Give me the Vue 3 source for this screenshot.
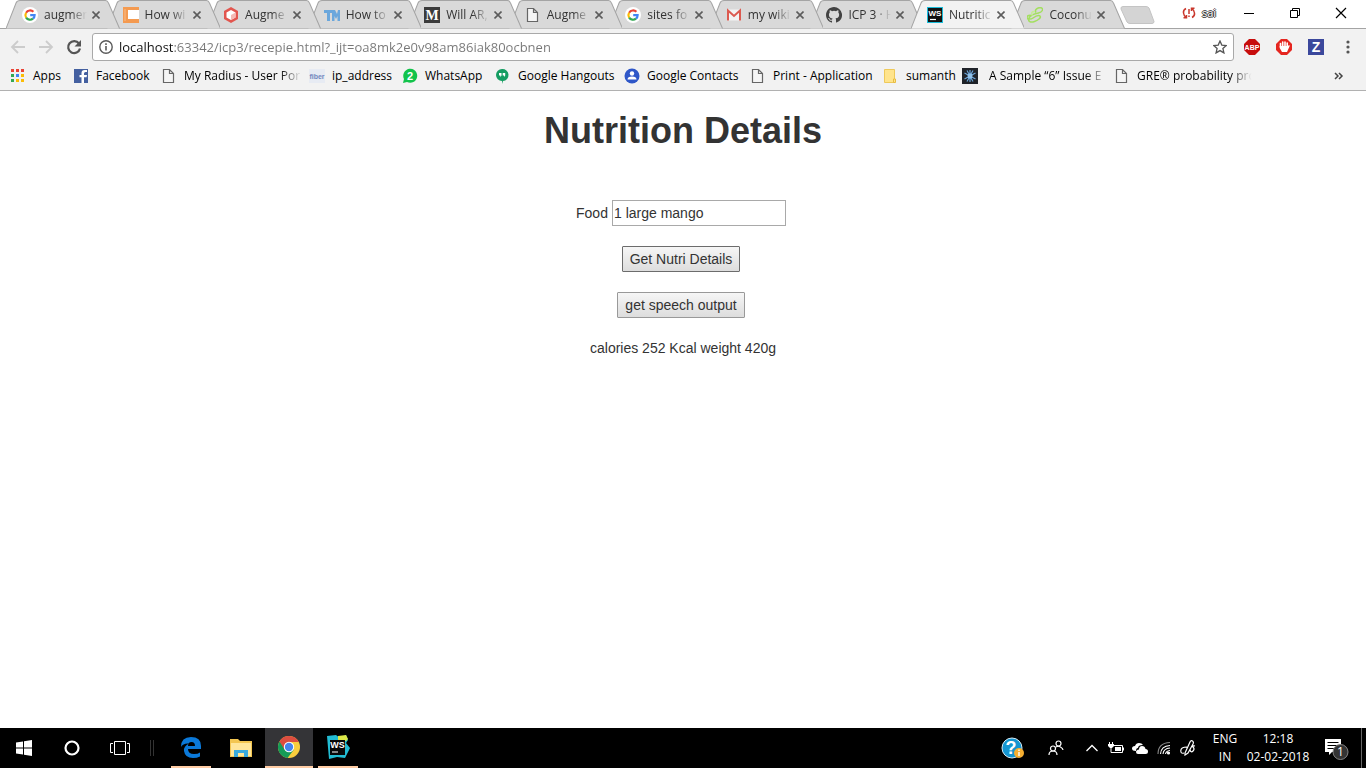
<script setup>
import { ref } from 'vue'

const page = '<path d="M2.500 1.500h6l4 4v9h-10zM8.500 1.500v4h4" fill="#f5f5f5" stroke="#666" stroke-width="1.200"/>'
const google = '<circle cx="8" cy="8" r="8" fill="#fff"/><g fill="none" stroke-width="2.200"><path d="M4.100 5.700A4.700 4.700 0 0 1 11.400 4.800" stroke="#ea4335"/><path d="M4.100 5.700A4.700 4.700 0 0 0 4.100 10.600" stroke="#fbbc05"/><path d="M4.100 10.600A4.700 4.700 0 0 0 11 11.700" stroke="#34a853"/><path d="M11 11.700Q12.600 10.400 12.600 8.200H8.200" stroke="#4285f4"/></g>'
const wsText = '<text x="8" y="9" text-anchor="middle" font-family="Liberation Sans" font-weight="700" font-size="8" fill="#fff">WS</text>'

const icons = {
  page,
  google,
  orange: '<path d="M0 0h16v3H5v9h11v4H0z" fill="#f49a50"/><path d="M5 3h11v9H5z" fill="#fff"/><path d="M2 2v12" stroke="#f8bd87"/>',
  hex: '<path d="M8 0l7 4v8l-7 4-7-4V4z" fill="#e2564f"/><path d="M8 3l4.500 2.500v5L8 13l-4.500-2.500v-5z" fill="#fff"/><path d="M8 8l4.500-2.500v5L8 13z" fill="#f5bab5"/>',
  tm: '<path d="M0 3h9v3H6v8H3V6H0zM8 3h3l2 4 1-4h2v11h-2.500V9L12 12 10.500 9v5H8z" fill="#6ba7dc"/>',
  medium: '<path d="M0 0h16v16H0z" fill="#3b3b3b"/><text x="8" y="13" text-anchor="middle" font-family="Liberation Serif" font-weight="700" font-size="14" fill="#fff">M</text>',
  gmail: '<path d="M1 2.500h14v11H1z" fill="#f3f3f3"/><path d="M2 13.500v-10L8 9l6-5.500v10" fill="none" stroke="#dc5a50" stroke-width="2"/>',
  github: '<path d="M8 0C3.580 0 0 3.580 0 8c0 3.540 2.290 6.530 5.470 7.590.4.070.55-.17.55-.38v-1.490c-2.010.37-2.530-.49-2.690-.94-.09-.23-.48-.94-.82-1.130-.28-.15-.68-.52-.01-.53.63-.01 1.080.58 1.230.82.72 1.210 1.870.87 2.330.66.070-.52.28-.87.51-1.070-1.780-.2-3.640-.89-3.640-3.950 0-.87.31-1.590.82-2.150-.08-.2-.36-1.020.08-2.120 0 0 .67-.21 2.200.82a7.400 7.400 0 0 1 4 0c1.530-1.040 2.200-.82 2.200-.82.44 1.100.16 1.920.08 2.120.51.56.82 1.270.82 2.150 0 3.070-1.870 3.750-3.650 3.950.29.25.54.73.54 1.480v2.200c0 .21.15.46.55.38A8 8 0 0 0 8 0z" fill="#424242"/>',
  ws: '<path d="M0 0h16v16H0z" fill="#19bcd9"/><path d="M1 1h14v14H1z" fill="#111"/>' + wsText + '<path d="M3 12.500h6" stroke="#fff" stroke-width="1.200"/>',
  coconut: '<g fill="none" stroke="#a3df5f" stroke-width="1.500"><path d="M9 5.500C7 3 11 0 14 .8s1.500 4.500-2.500 5.200-8 1.800-9.500 5 1.500 5 5.500 3.500 7-4 5.500-5.500-5 .5-7 2-6 1.500-6-.5 3-3 5-1.500"/><path d="M5.500 8.500C3.500 6 5 4 8 4.500" stroke="#c5ec96"/></g>',
  apps: '<path d="M1 1h3v3H1zM6 1h3v3H6zM11 1h3v3h-3z" fill="#ea4335"/><path d="M1 6h3v3H1zM1 11h3v3H1z" fill="#34a853"/><path d="M6 6h3v3H6z" fill="#4285f4"/><path d="M11 6h3v3h-3zM6 11h3v3H6zM11 11h3v3h-3z" fill="#fbbc05"/>',
  facebook: '<path d="M1 1h14v14H1z" fill="#4460a0"/><path d="M14 4h-1.500q-1.500 0-1.500 1.500V7h3l-.4 2.200H11V15H8.500V9.200h-2V7h2V5q0-3 3-3H14z" fill="#fff"/>',
  fiber: '<path d="M0 1h16v14H0z" fill="#e7ebf3"/><text x="8" y="11" text-anchor="middle" font-family="Liberation Sans" font-weight="700" font-size="7" fill="#7388bd">fiber</text>',
  whatsapp: '<path d="M1 15l1-4a7 7 0 1 1 3 3z" fill="#12c34b"/><text x="8" y="12" text-anchor="middle" font-family="Liberation Sans" font-weight="700" font-size="11" fill="#fff">2</text>',
  hangouts: '<path d="M7 1a6 6 0 0 1 1 12l-1 3v-3A6 6 0 0 1 7 1z" fill="#159d62"/><path d="M4 5h2.500v2.500L5.300 9V7.500H4zM7.700 5h2.500v2.500L9 9V7.500H7.700z" fill="#fff"/>',
  contacts: '<circle cx="8" cy="8" r="7.500" fill="#2f57c8"/><circle cx="8" cy="5.500" r="2.200" fill="#fff"/><path d="M3.500 11.500q0-3 4.500-3t4.500 3z" fill="#fff"/>',
  folder: '<path d="M1.500 1.500h10v13h-10z" fill="#ffe48c" stroke="#eec95a"/><path d="M10.500 11h2v3.500h-2z" fill="#ffe48c" stroke="#e8bd42"/>',
  star: '<path d="M0 0h16v16H0z" fill="#1f2329"/><path d="M8 2v12M2.500 5l11 6M2.500 11l11-6M5 2.500l6 11M11 2.500l-6 11" stroke="#6ba4d8" stroke-width="1.200"/><circle cx="8" cy="8" r="2.500" fill="#8fc0e8"/>',
  abp: '<path d="M5 0h6l5 5v6l-5 5H5l-5-5V5z" fill="#c70d0c"/><text x="8" y="11" text-anchor="middle" font-family="Liberation Sans" font-weight="700" font-size="7" fill="#fff">ABP</text>',
  hand: '<path d="M5 0h6l5 5v6l-5 5H5l-5-5V5z" fill="#e52620"/><path d="M4.500 8V4.500M6.700 7V3M9 7V3M11.200 8V4" stroke="#fff" stroke-width="1.600" stroke-linecap="round"/><path d="M3.700 7H12l1-1q1 0 .5 1.500L11 13H6L3.700 9z" fill="#fff"/>',
  z: '<path d="M0 0h16v16H0z" fill="#3b489c"/><text x="8" y="13" text-anchor="middle" font-family="Liberation Sans" font-weight="700" font-size="14" fill="#fff">Z</text>',
  windows: '<path d="M0 2.500l7-1v6H0zM8 1.300L16 0v7.500H8zM0 8.500h7v6l-7-1zM8 8.500h8V16l-8-1.300z" fill="#fff"/>',
  cortana: '<circle cx="8" cy="8" r="6.500" fill="none" stroke="#fff" stroke-width="2.200"/>',
}

const tabs = [
  { title: 'augmer', icon: 'google' },
  { title: 'How wi', icon: 'orange' },
  { title: 'Augme', icon: 'hex' },
  { title: 'How to', icon: 'tm' },
  { title: 'Will AR,', icon: 'medium' },
  { title: 'Augme', icon: 'page' },
  { title: 'sites fo', icon: 'google' },
  { title: 'my wiki', icon: 'gmail' },
  { title: 'ICP 3 · H', icon: 'github' },
  { title: 'Nutritic', icon: 'ws', active: true },
  { title: 'Coconu', icon: 'coconut' },
]

const bookmarks = [
  { title: 'Apps', icon: 'apps' },
  { title: 'Facebook', icon: 'facebook' },
  { title: 'My Radius - User Por', icon: 'page', fade: true },
  { title: 'ip_address', icon: 'fiber' },
  { title: 'WhatsApp', icon: 'whatsapp' },
  { title: 'Google Hangouts', icon: 'hangouts' },
  { title: 'Google Contacts', icon: 'contacts' },
  { title: 'Print - Application', icon: 'page' },
  { title: 'sumanth', icon: 'folder' },
  { title: 'A Sample “6” Issue E', icon: 'star', fade: true, wide: true },
  { title: 'GRE® probability pro', icon: 'page', fade: true },
]

const url = ref('localhost:63342/icp3/recepie.html?_ijt=oa8mk2e0v98am86iak80ocbnen')
const food = ref('1 large mango')
</script>

<template>
  <div class="screen">
    <header class="browser">
      <div class="strip">
        <div class="tabs">
          <div v-for="(tab, i) in tabs" :key="i" class="tab" :class="{ active: tab.active }" :style="{ zIndex: tab.active ? 20 : 12 - i }">
            <svg class="shape" viewBox="0 0 113 29" preserveAspectRatio="none">
              <path d="M0 28.500L10 3Q11 .5 14 .5H99Q101 .5 102 3L113 28.500" />
            </svg>
            <svg class="icon" viewBox="0 0 16 16" v-html="icons[tab.icon]"></svg>
            <span class="tab-title">{{ tab.title }}</span>
            <button class="close" aria-label="Close tab"><svg viewBox="0 0 8 8" width="8" height="8"><path d="M.5 .5l7 7M7.500 .5l-7 7" stroke="#5c5c5c" stroke-width="1.600" /></svg></button>
          </div>
        </div>
        <button class="new-tab" aria-label="New tab"><svg viewBox="0 0 36 18" width="36" height="18"><path d="M3 .5H26Q28 .5 29 2L34 15.500Q34 17.500 32 17.500H10Q8 17.500 7 16L1 3Q.5 .5 3 .5z" fill="#d4d4d4" stroke="#c4c4c4" /></svg></button>
        <div class="window-controls">
          <button class="profile">
            <svg viewBox="0 0 14 12" width="14" height="12" fill="none" stroke="#c9372c" stroke-width="1.500"><path d="M4 1.500Q1 3 1.500 6T4 10.500M1.500 10.800h3V8M10 10.500q3-1.500 2.500-4.500T10 1.500M12.500 1.200h-3V4M7 2v5M7 8.500v1.500" /></svg>
            <span>sai</span>
          </button>
          <button aria-label="Minimize"><svg viewBox="0 0 12 12" width="12" height="12"><path d="M1 6.500h10" stroke="#000" /></svg></button>
          <button aria-label="Restore"><svg viewBox="0 0 12 12" width="12" height="12"><path d="M1.500 3.500h7v7h-7zM3.500 3.500v-2h7v7h-2" fill="none" stroke="#000" /></svg></button>
          <button aria-label="Close"><svg viewBox="0 0 12 12" width="12" height="12"><path d="M1 1l10 10M11 1L1 11" stroke="#000" stroke-width="1.200" /></svg></button>
        </div>
      </div>

      <div class="toolbar">
        <div class="nav">
          <button aria-label="Back"><svg viewBox="0 0 16 16" width="16" height="16"><path d="M15 8H2M8 2L2 8l6 6" fill="none" stroke="#ccc" stroke-width="1.800" /></svg></button>
          <button aria-label="Forward"><svg viewBox="0 0 16 16" width="16" height="16"><path d="M1 8h13M8 2l6 6-6 6" fill="none" stroke="#ccc" stroke-width="1.800" /></svg></button>
          <button aria-label="Reload"><svg viewBox="0 0 16 16" width="16" height="16"><path d="M13 4.500A6 6 0 1 0 14 9.500" fill="none" stroke="#555" stroke-width="2.200" /><path d="M15 1v6.500H8.500z" fill="#555" /></svg></button>
        </div>
        <div class="omnibox">
          <svg viewBox="0 0 14 14" width="14" height="14"><circle cx="7" cy="7" r="6.200" fill="none" stroke="#5a5a5a" stroke-width="1.400" /><path d="M7 6v4.500M7 3.300v1.600" stroke="#5a5a5a" stroke-width="1.600" /></svg>
          <input v-model="url" class="url" aria-label="Address" spellcheck="false" />
          <button aria-label="Bookmark this page"><svg viewBox="0 0 14 14" width="14" height="14"><path d="M7 1l1.800 4.100 4.400.4-3.300 3 1 4.400L7 10.600l-3.900 2.300 1-4.400-3.300-3 4.400-.4z" fill="none" stroke="#555" stroke-width="1.300" /></svg></button>
        </div>
        <div class="extensions">
          <button aria-label="Adblock Plus"><svg class="icon" viewBox="0 0 16 16" v-html="icons.abp"></svg></button>
          <button aria-label="Adblock"><svg class="icon" viewBox="0 0 16 16" v-html="icons.hand"></svg></button>
          <button aria-label="Z extension"><svg class="icon" viewBox="0 0 16 16" v-html="icons.z"></svg></button>
          <button aria-label="Menu"><svg class="icon" viewBox="0 0 16 16" fill="#555"><circle cx="8" cy="3" r="1.600" /><circle cx="8" cy="8" r="1.600" /><circle cx="8" cy="13" r="1.600" /></svg></button>
        </div>
      </div>

      <nav class="bookmarks">
        <a v-for="b in bookmarks" :key="b.title" href="#" class="bookmark" :class="{ wide: b.wide }">
          <svg class="icon" viewBox="0 0 16 16" v-html="icons[b.icon]"></svg>
          <span :class="{ fade: b.fade }">{{ b.title }}</span>
        </a>
        <button class="more" aria-label="More bookmarks"><svg viewBox="0 0 10 8" width="10" height="8"><path d="M1 1l3 3-3 3M5 1l3 3-3 3" fill="none" stroke="#444" stroke-width="1.500" /></svg></button>
      </nav>
    </header>

    <main class="content">
      <h1>Nutrition Details</h1>
      <form @submit.prevent>
        <div class="row"><label for="food">Food</label><input id="food" v-model="food" type="text" /></div>
        <button type="submit" class="primary">Get Nutri Details</button>
        <button type="button">get speech output</button>
      </form>
      <p>calories 252 Kcal weight 420g</p>
    </main>

    <footer class="taskbar">
      <div class="launch">
        <button aria-label="Start"><svg class="icon" viewBox="0 0 16 16" v-html="icons.windows"></svg></button>
        <button aria-label="Search"><svg class="icon" viewBox="0 0 16 16" v-html="icons.cortana"></svg></button>
        <button aria-label="Task view"><svg viewBox="0 0 20 14" width="20" height="14"><path d="M4.500 .5h11v13h-11zM3 2.500H.5v9H3M17 2.500h2.500v9H17" fill="none" stroke="#fff" /></svg></button>
        <span class="divider"></span>
        <button class="running" aria-label="Edge"><svg viewBox="0 0 22 22" width="22" height="22"><path d="M1 11Q1 1 11 1t10 9v3H8q0 5 6 5 4 0 6-1.500v4Q17 22 13 22 5 22 4 15q-.5-5 5-7.500Q3 7 1 11zM8 10h7q0-4-3.500-4T8 10z" fill="#0b79d9" /></svg></button>
        <button aria-label="File Explorer"><svg viewBox="0 0 22 20" width="22" height="20"><path d="M0 1h8l2 2h12v16H0z" fill="#f3c651" /><path d="M1 5h20v13H1z" fill="#ffe69a" /><path d="M4 12h14v7h-4v-4H8v4H4z" fill="#39aadd" /></svg></button>
        <button class="running selected" aria-label="Chrome"><svg viewBox="0 0 22 22" width="22" height="22"><circle cx="11" cy="11" r="11" fill="#f9cd3d" /><path d="M11 11L1.500 5.500A11 11 0 0 0 9.500 22l6.300-8.300z" fill="#159b57" /><path d="M11 11L6.500 13.500 1.500 5.500A11 11 0 0 1 20.800 6H11z" fill="#dc4d40" /><circle cx="11" cy="11" r="5.200" fill="#fff" /><circle cx="11" cy="11" r="4.200" fill="#4685ef" /></svg></button>
        <button class="running" aria-label="WebStorm"><svg viewBox="0 0 24 24" width="24" height="24"><path d="M1 1l9-1 4 3 6-3 2 5-2 3 4 5-5 10-8-1-8 2z" fill="#22bcd3" /><path d="M12 1l8-1 2 4-2 2h-8z" fill="#dbe747" /><path d="M4 5h15v15H4z" fill="#080808" /><text x="11.500" y="13" text-anchor="middle" font-family="Liberation Sans" font-weight="700" font-size="9" fill="#fff">WS</text><path d="M6 17h6" stroke="#fff" /></svg></button>
      </div>
      <div class="tray">
        <button aria-label="Help"><svg viewBox="0 0 24 22" width="24" height="22"><circle cx="11" cy="11" r="10" fill="#1495d1" stroke="#d7edf8" /><text x="10" y="17" text-anchor="middle" font-family="Liberation Sans" font-weight="700" font-size="18" fill="#fff">?</text><circle cx="18" cy="16" r="5" fill="#f5ae31" /><path d="M18 15v4M18 12.500v1.500" stroke="#fff" stroke-width="1.400" /></svg></button>
        <button aria-label="People"><svg viewBox="0 0 16 16" width="16" height="16" fill="none" stroke="#fff" stroke-width="1.200"><circle cx="5" cy="8.500" r="2.500" /><path d="M1 15q0-4 4-4t4 4" /><circle cx="10.500" cy="3.500" r="2.500" /><path d="M8 7q2-1.500 4.500 0T15 10" /></svg></button>
        <button aria-label="Show hidden icons"><svg viewBox="0 0 12 8" width="12" height="8"><path d="M.5 7L6 1.500 11.500 7" fill="none" stroke="#fff" stroke-width="1.300" /></svg></button>
        <button aria-label="Battery"><svg viewBox="0 0 16 12" width="16" height="12"><path d="M5.500 3.500h9v7h-10M15.500 5.500v3" fill="none" stroke="#fff" /><path d="M7 5h6v4H7z" fill="#fff" /><path d="M1.500 0v3M4.500 0v3" stroke="#fff" /><path d="M0 2h6v2L4 6H2L0 4z" fill="#fff" /><path d="M3 6v4.500h2" fill="none" stroke="#fff" /></svg></button>
        <button aria-label="OneDrive"><svg viewBox="0 0 16 11" width="16" height="11" fill="#fff"><path d="M4 8Q0 8 0 5.500T3 3q1-3 4-3t4 2Q6 2 6 5 4 5 4 8z" /><path d="M6 11q-2 0-2-2t3-2.500Q7 3 10 3t3.500 3Q16 6 16 8.500T13.500 11z" /></svg></button>
        <button aria-label="Wi-Fi"><svg viewBox="0 0 14 14" width="14" height="14" fill="none" stroke="#fff" stroke-width="1.100"><path d="M1 13Q1 2 13 1.500" stroke="#888" /><path d="M3.500 13Q4 5 13 4.500M6 13q.5-5.500 7-6M8.500 13q.5-3 4.500-3.500" /><circle cx="11.500" cy="12" r="1" fill="#fff" /></svg></button>
        <button aria-label="Windows Ink"><svg viewBox="0 0 16 16" width="16" height="16" fill="none" stroke="#fff" stroke-width="1.200"><path d="M5 13L10 2q1-2 2.500-1T13 4L8 13l-3 2zM7 7Q1 7 .8 10.500T4 13M10 10q1 3 3 1t0-4 2-1" /></svg></button>
        <button class="lang"><span>ENG</span><span>IN</span></button>
        <button class="clock"><span>12:18</span><span>02-02-2018</span></button>
        <button aria-label="Notifications"><svg viewBox="0 0 24 24" width="24" height="24"><path d="M0 3h16v13H7l-3 3v-3H0z" fill="#fff" /><path d="M2.500 6.500h11M2.500 9.500h11M2.500 12.500h8" stroke="#000" /><circle cx="15.500" cy="16" r="7.500" fill="#343434" stroke="#858585" /><text x="15.500" y="20" text-anchor="middle" font-family="Open Sans" font-size="12" fill="#fff">1</text></svg></button>
        <span class="peek"></span>
      </div>
    </footer>
  </div>
</template>

<style>
body {
  margin: 0;
}
</style>

<style scoped>
.screen {
  display: flex;
  flex-direction: column;
  min-height: 100vh;
  background: #fff;
  font: 12px/16px "Open Sans", sans-serif;
  color: #000;
}
* {
  box-sizing: border-box;
}
button {
  display: flex;
  align-items: center;
  justify-content: center;
  margin: 0;
  padding: 0;
  border: 0;
  background: none;
  color: inherit;
  font: inherit;
}
svg {
  display: block;
  flex: none;
}
.icon {
  width: 16px;
  height: 16px;
}
.browser {
  background: #f2f2f2;
  border-bottom: 1px solid #b1b1b1;
}
.strip {
  display: flex;
  height: 29px;
  padding-left: 6px;
  background: #fff;
  border-bottom: 1px solid #a4a4a4;
}
.tabs {
  display: flex;
  flex: 0 1 1106px;
  height: 29px;
}
.tab {
  position: relative;
  display: flex;
  align-items: center;
  flex: 1 1 0;
  min-width: 0;
  padding-left: 16px;
}
.shape {
  position: absolute;
  left: 0;
  top: 0;
  width: calc(100% + 13px);
  height: 29px;
  fill: #d9d9d9;
  stroke: #a4a4a4;
}
.active .shape {
  fill: #f2f2f2;
}
.tab .icon {
  position: relative;
}
.tab-title {
  position: relative;
  width: 44px;
  margin-left: 6px;
  overflow: hidden;
  white-space: nowrap;
  color: #333;
  mask-image: linear-gradient(to right, #000 60%, transparent 98%);
}
.close {
  position: relative;
  width: 16px;
  height: 16px;
}
.new-tab {
  width: 36px;
  height: 18px;
  margin: 6px 0 0 8px;
}
.window-controls {
  display: flex;
  align-items: center;
  height: 26px;
  margin-left: auto;
  padding-right: 2px;
}
.window-controls button {
  width: 46px;
  height: 26px;
}
.window-controls .profile {
  gap: 6px;
  margin-right: 4px;
}
.window-controls .profile span {
  font-size: 11px;
  color: #fff;
  text-shadow: 1px 0 #333, -1px 0 #333, 0 1px #333, 0 -1px #333;
}
.toolbar {
  display: flex;
  align-items: center;
  height: 36px;
}
.nav {
  display: flex;
  gap: 12px;
  padding-left: 10px;
}
.omnibox {
  display: flex;
  align-items: center;
  flex: 1;
  height: 28px;
  margin-left: 10px;
  padding: 0 6px;
  border: 1px solid #a9a9a9;
  border-radius: 3px;
  background: #fff;
}
.url {
  flex: 1;
  height: 24px;
  margin-left: 6px;
  padding: 0;
  border: 0;
  outline: 0;
  font: 13px/20px "Open Sans", sans-serif;
  color: transparent;
  background: linear-gradient(to right, #111 54px, #777 54px);
  background-clip: text;
}
.extensions {
  display: flex;
  gap: 16px;
  padding: 0 10px;
}
.bookmarks {
  display: grid;
  grid-template-columns: 63px 88px 148px 93px 93px 129px 126px 133px 79px 152px 140px 1fr;
  align-items: center;
  height: 25px;
  padding: 0 22px 4px 10px;
}
.bookmark {
  display: flex;
  align-items: center;
  gap: 7px;
  min-width: 0;
  color: #000;
  text-decoration: none;
  white-space: nowrap;
}
.wide {
  gap: 11px;
}
.fade {
  width: 120px;
  overflow: hidden;
  mask-image: linear-gradient(to right, #000 80%, transparent 98%);
}
.more {
  justify-self: end;
}
.content {
  flex: 1;
  padding: 20px 0;
  text-align: center;
  color: #333;
  font: 14px/20px "Liberation Sans", Arial, sans-serif;
}
h1 {
  margin: 0 0 49px;
  font-size: 36px;
  line-height: 40px;
  font-weight: 700;
}
form {
  display: flex;
  flex-direction: column;
  align-items: center;
  gap: 20px;
  padding-right: 4px;
}
.row {
  display: flex;
  align-items: center;
  gap: 4px;
}
.row input {
  width: 174px;
  height: 26px;
  padding: 1px;
  border: 1px solid #a9a9a9;
  font: inherit;
  color: inherit;
}
form button {
  height: 26px;
  padding: 1px 7px;
  border: 1px solid #999;
  border-radius: 1px;
  background: linear-gradient(#f6f6f6, #ddd);
}
form .primary {
  border-color: #6c6c6c;
}
.content p {
  margin: 20px 0 0;
}
.taskbar {
  display: flex;
  justify-content: space-between;
  height: 40px;
  background: #000;
  color: #fff;
}
.launch,
.tray {
  display: flex;
}
.launch button {
  width: 48px;
  height: 40px;
}
.divider {
  width: 4px;
  height: 16px;
  margin: 12px 13px 0 6px;
  border: solid #333;
  border-width: 0 1px;
}
.launch .running {
  width: 40px;
  margin: 0 6px 0 4px;
  border-bottom: 2px solid #ffcca4;
}
.launch .selected {
  width: 48px;
  margin: 0 1px 0 0;
  background: #343437;
}
.tray {
  align-items: center;
  gap: 8px;
}
.tray button {
  min-width: 16px;
  height: 40px;
}
.tray button:first-child {
  margin-right: 15px;
}
.tray button:nth-child(2) {
  margin-right: 12px;
}
.tray .lang,
.tray .clock {
  flex-direction: column;
  line-height: 18px;
}
.tray .lang {
  width: 26px;
  margin-left: 8px;
}
.tray .clock {
  width: 64px;
}
.tray button:nth-last-child(2) {
  margin: 0 4px 0 7px;
}
.peek {
  width: 5px;
  height: 40px;
  border-left: 1px solid #666;
}
</style>
